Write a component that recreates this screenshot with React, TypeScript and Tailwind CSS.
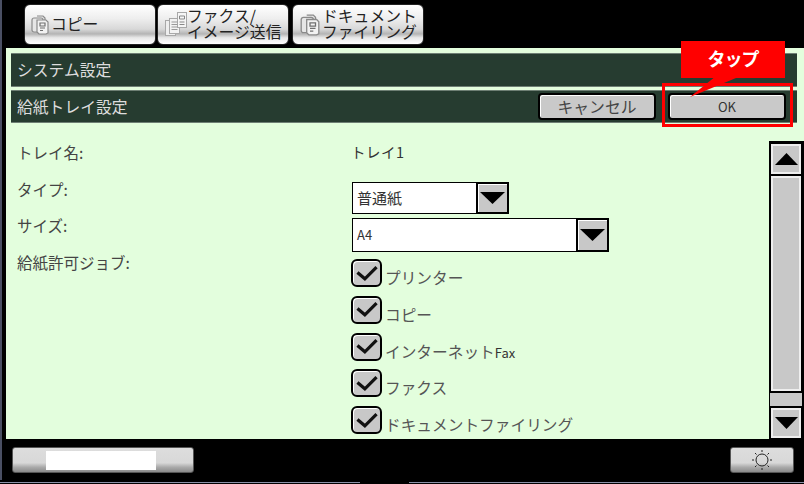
const font = { fontFamily: '"Noto Sans CJK JP", "Liberation Sans", sans-serif' };

function CopyIcon({ w = 18, h = 20 }: { w?: number; h?: number }) {
  return (
    <svg width={w} height={h} viewBox="0 0 18 20" fill="none" stroke="#8a8a8a" strokeWidth="1.200" className="shrink-0">
      <path d="M6 1h6l2 2v3" fill="#e6e6e6" />
      <rect x="1" y="3" width="11" height="14" rx="2" fill="#e6e6e6" />
      <path d="M6 5h9l2 2v11l-2 1H8l-2-2z" fill="#f2f2f2" />
      <path d="M9 8h5v3H9zM9 13h5M9 15.500h3" stroke="#6f6f6f" />
    </svg>
  );
}

function FaxIcon() {
  return (
    <svg width="22" height="25" viewBox="0 0 22 25" fill="none" stroke="#a8a8a8" strokeWidth="1" className="shrink-0">
      <rect x="0.500" y="8.500" width="10" height="15" fill="#eee" />
      <rect x="4.500" y="6.500" width="10" height="15" fill="#f2f2f2" />
      <rect x="12.500" y="0.500" width="9" height="15" fill="#f6f6f6" />
      <path d="M6.500 10h6M6.500 12.500h6M6.500 15h6M6.500 17.500h6" stroke="#999" />
      <path d="M14.500 4h5v3h-5zM14.500 10h5M14.500 12.500h5" stroke="#888" />
    </svg>
  );
}

function Tab({ w, pad, icon, lines }: { w: string; pad: string; icon: React.ReactNode; lines: string[] }) {
  return (
    <div className={`${w} ${pad} h-[41px] rounded-[6px] border border-[#222] bg-[linear-gradient(180deg,#fff_0%,#eee_35%,#d8d8d8_62%,#b4b4b4_74%,#e8e8e8_84%,#fff_100%)] flex items-center text-[#222]`}>
      {icon}
      <div className="text-[15.800px] leading-[16px] whitespace-nowrap pb-[2px]">
        {lines.map((l) => (
          <div key={l}>{l}</div>
        ))}
      </div>
    </div>
  );
}

function Arrow({ down = false, w = 22, h = 12 }: { down?: boolean; w?: number; h?: number }) {
  return (
    <svg width={w} height={h} viewBox="0 0 22 12" preserveAspectRatio="none">
      <path d={down ? 'M0 0h22L11 12z' : 'M0 12h22L11 0z'} fill="#000" />
    </svg>
  );
}

function Select({ w, h, value, small }: { w: string; h: string; value: string; small?: boolean }) {
  return (
    <div className={`${w} ${h} shrink-0 flex border border-black bg-white`}>
      <div className={`flex-1 flex items-center pl-[4px] text-[#333] ${small ? 'text-[13px]' : 'text-[15px]'}`}>{value}</div>
      <div className="w-[33px] border-2 border-black bg-[#c8c8c8] shadow-[inset_1px_1px_0_#fff] flex items-center justify-center -my-px -mr-px">
        <Arrow down w={25} h={12} />
      </div>
    </div>
  );
}

function Check({ label, extra }: { label: string; extra?: string }) {
  return (
    <div className="h-[36.750px] shrink-0 flex items-start">
      <div className="w-[31px] h-[28px] rounded-[6px] border-2 border-black bg-[#c8c8c8] flex items-center justify-center shadow-[inset_1px_1px_0_#fff]">
        <svg width="24" height="17" viewBox="0 0 22 16" fill="none">
          <path d="M2 7l7 6L20 2" stroke="#111" strokeWidth="3" />
        </svg>
      </div>
      <span className="ml-[3px] mt-[8px] text-[15.700px] leading-[22px] text-[#555] whitespace-nowrap">
        {label}
        {extra && <span className="text-[13px] text-[#333]">{extra}</span>}
      </span>
    </div>
  );
}

function BottomButton({ w, children }: { w: string; children: React.ReactNode }) {
  return (
    <div className={`${w} h-[26px] rounded-[3px] border border-[#555] bg-[linear-gradient(180deg,#ddd_0%,#d8d8d8_62%,#aaa_80%,#8a8a8a_100%)] flex items-center justify-center`}>
      {children}
    </div>
  );
}

export default function App() {
  return (
    <div className="relative w-[804px] h-[484px] bg-black overflow-hidden flex flex-col" style={font}>
      <div className="h-[48px] shrink-0 flex pl-[24px] pt-[4px]">
        <Tab w="w-[132px]" pad="pl-[6px] gap-[2px]" icon={<CopyIcon />} lines={['コピー']} />
        <div className="w-[1px]" />
        <Tab w="w-[132px]" pad="pl-[7px]" icon={<FaxIcon />} lines={['ファクス/', 'イメージ送信']} />
        <div className="w-[3px]" />
        <Tab w="w-[132px]" pad="pl-[7px] gap-[2px]" icon={<CopyIcon w={20} h={22} />} lines={['ドキュメント', 'ファイリング']} />
      </div>
      <div className="ml-[6px] h-[391px] shrink-0 bg-[#e3fedd] flex flex-col">
        <div className="ml-[5px] mr-[7px] mt-[5px] flex flex-col gap-[3px]">
          <div className="h-[34px] bg-[#263c30] border-y border-[#6e7f74] flex items-center pl-[6px] text-[15.800px] text-[#ddd]">
            システム設定
          </div>
          <div className="h-[33px] bg-[#263c30] border-y border-[#6e7f74] flex items-center pl-[6px] text-[15.800px] text-[#ddd]">
            <span className="flex-1">給紙トレイ設定</span>
            <button className="w-[118px] h-[27px] rounded-[4px] border-2 border-black bg-[#c9c9c9] shadow-[inset_1px_1px_0_#fff] text-[15.800px] leading-none text-[#444] mr-[12px]">
              キャンセル
            </button>
            <button className="w-[118px] h-[27px] rounded-[4px] border-2 border-black bg-[#c9c9c9] shadow-[inset_1px_1px_0_#fff] text-[13px] text-[#333] mr-[11px]">
              OK
            </button>
          </div>
        </div>
        <div className="flex-1 flex min-h-0 mt-[19px]">
          <div className="w-[335px] pl-[11px] text-[15.500px] leading-[20px] text-[#444]">
            <div className="h-[37px]">トレイ名:</div>
            <div className="h-[36px]">タイプ:</div>
            <div className="h-[37px]">サイズ:</div>
            <div>給紙許可ジョブ:</div>
          </div>
          <div className="flex-1 flex flex-col">
            <div className="h-[40px] shrink-0 text-[14.500px] leading-[20px] text-[#333] pl-[10px] tracking-[0.5px]">トレイ1</div>
            <div className="pl-[11px] shrink-0 flex flex-col gap-[4px]">
              <Select w="w-[157px]" h="h-[32px]" value="普通紙" />
              <Select w="w-[257px]" h="h-[34px]" value="A4" small />
            </div>
            <div className="pl-[10px] mt-[7px] shrink-0 flex flex-col">
              <Check label="プリンター" />
              <Check label="コピー" />
              <Check label="インターネット" extra="Fax" />
              <Check label="ファクス" />
              <Check label="ドキュメントファイリング" />
            </div>
          </div>
          <div className="w-[35px] flex flex-col bg-black pl-[2px] pr-[3px] pt-[3px] pb-[1px] -mt-[1px]">
            <div className="h-[30px] bg-[#c8c8c8] border-2 border-[#eee] flex items-center justify-center">
              <Arrow w={23} h={12} />
            </div>
            <div className="flex-1 mt-[2px] bg-[#c8c8c8] border-2 border-[#eee]" />
            <div className="h-[13px] my-[2px] -mx-[1px] bg-[#c8c8c8]" />
            <div className="h-[30px] bg-[#c8c8c8] border-2 border-[#eee] flex items-center justify-center">
              <Arrow down w={23} h={12} />
            </div>
          </div>
        </div>
      </div>
      <div className="flex-1 flex items-start justify-between pl-[12px] pr-[10px] pt-[8px]">
        <BottomButton w="w-[182px]">
          <div className="w-[110px] h-[19px] -ml-[4px] bg-white" />
        </BottomButton>
        <BottomButton w="w-[64px]">
          <svg width="22" height="22" viewBox="0 0 22 22" fill="none" stroke="#222" strokeWidth="1">
            <circle cx="11" cy="11" r="6" />
            <path d="M11 1v2M11 19v2M1 11h2M19 11h2M4 4l1.500 1.500M16.500 16.500L18 18M18 4l-1.500 1.500M5.500 16.500L4 18" />
          </svg>
        </BottomButton>
      </div>
      <div className="absolute left-0 top-0 w-[2px] h-[480px] bg-[#4a4f63]" />
      <div className="absolute left-0 top-[482px] w-[360px] h-[1px] bg-[#8a90a8]" />
      <div className="absolute left-[409px] top-[482px] w-[395px] h-[1px] bg-[#8a90a8]" />
      <div className="absolute left-[662px] top-[83px] w-[131px] h-[44px] border-[3px] border-[#f00]" />
      <div className="absolute left-[681px] top-[41px] w-[104px] h-[37px] bg-[#f00] flex items-center justify-center text-white font-bold text-[18px] tracking-[-1px] pb-[2px]">
        タップ
      </div>
      <svg className="absolute left-[680px] top-[76px]" width="60" height="24" viewBox="0 0 60 24">
        <path d="M36 0L10 21 56 2V0z" fill="#f00" />
      </svg>
    </div>
  );
}
